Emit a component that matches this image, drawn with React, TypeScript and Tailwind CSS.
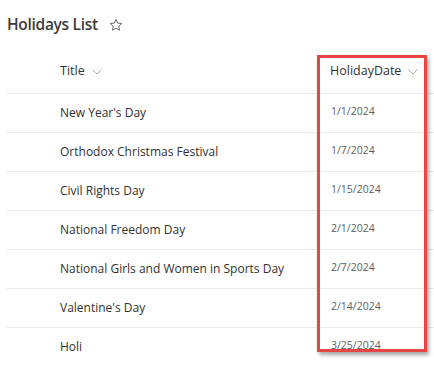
import React from "react";

const rows = [
  { title: "New Year's Day", date: "1/1/2024" },
  { title: "Orthodox Christmas Festival", date: "1/7/2024" },
  { title: "Civil Rights Day", date: "1/15/2024" },
  { title: "National Freedom Day", date: "2/1/2024" },
  { title: "National Girls and Women in Sports Day", date: "2/7/2024" },
  { title: "Valentine's Day", date: "2/14/2024" },
  { title: "Holi", date: "3/25/2024" },
];

function Chevron() {
  return (
    <svg width="10" height="6" viewBox="0 0 10 6" className="ml-[7px] text-[#a19f9d]">
      <path d="M0.5 0.5 L5 5 L9.5 0.5" fill="none" stroke="currentColor" strokeWidth="0.9" />
    </svg>
  );
}

function Star() {
  return (
    <svg width="14" height="14" viewBox="0 0 24 24" className="text-[#605e5c]">
      <path
        d="M12 2.5l2.9 6.2 6.8.8-5 4.7 1.3 6.7L12 17.6l-6 3.3 1.3-6.7-5-4.7 6.8-.8z"
        fill="none"
        stroke="currentColor"
        strokeWidth="1.6"
        strokeLinejoin="round"
      />
    </svg>
  );
}

export default function App() {
  return (
    <div
      className="relative w-[434px] h-[366px] overflow-hidden bg-white text-[#323130]"
      style={{ fontFamily: '"Open Sans", "Noto Sans", sans-serif' }}
    >
      <div className="flex items-center h-[50px] pl-[7px] pb-[1px]">
        <h1 className="text-[15.5px] font-semibold tracking-[-0.3px] text-[#3b3a39]">Holidays List</h1>
        <span className="ml-[11px] mt-[1px]">
          <Star />
        </span>
      </div>

      <div className="ml-[7px]">
        <div className="flex items-center h-[44px] border-b border-[#edebe9] text-[12.5px]">
          <div className="flex items-center w-[323px] pl-[53px]">
            Title
            <Chevron />
          </div>
          <div className="flex items-center">
            HolidayDate
            <Chevron />
          </div>
        </div>

        {rows.map((r) => (
          <div key={r.title} className="flex items-center h-[39px] border-b border-[#edebe9]">
            <div className="w-[324px] pl-[53px] text-[12px] text-[#323130]">{r.title}</div>
            <div className="text-[10.5px] text-[#605e5c] -mt-[3px]">{r.date}</div>
          </div>
        ))}
      </div>

      <div className="absolute left-[317px] top-[55px] w-[110px] h-[297px] border-[3.5px] border-[#e84545] shadow-[2px_3px_4px_rgba(0,0,0,0.35)]" />
    </div>
  );
}
